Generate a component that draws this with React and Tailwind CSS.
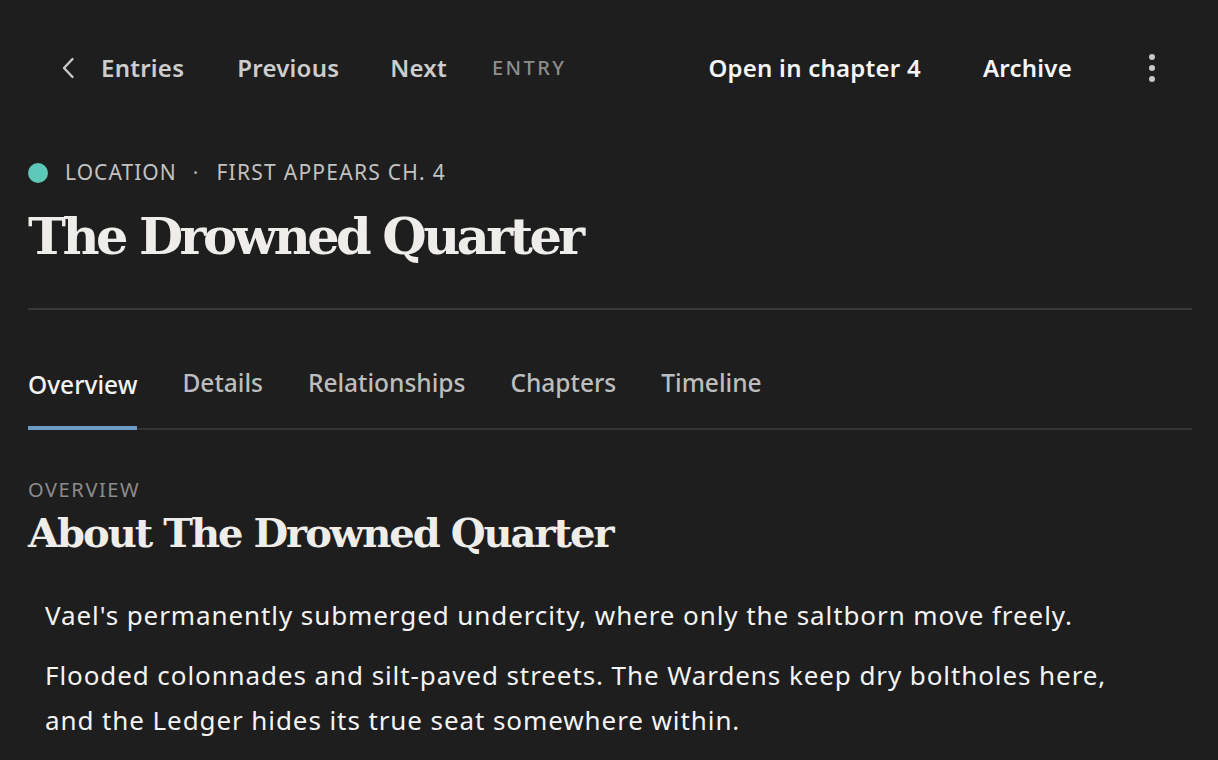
import React from "react";

export default function App() {
  return (
    <div className="min-h-screen w-full bg-[#1e1e1e] text-[#f0eeea] font-['Noto_Sans',sans-serif] pt-[40px]">
      <header className="flex items-center h-[56px] pl-[56px] pr-[54px]">
        <div className="flex items-center">
          <button className="flex items-center justify-center w-[24px] h-[40px] text-[#c9c9c9]">
            <svg width="14" height="22" viewBox="0 0 14 22" fill="none">
              <path d="M11.5 2 L3 11 L11.5 20" stroke="currentColor" strokeWidth="2.4" strokeLinecap="round" strokeLinejoin="round" />
            </svg>
          </button>
          <span className="ml-[21px] text-[24px] font-semibold tracking-[0.01em] text-[#cdcdcd]">Entries</span>
          <span className="ml-[53px] text-[24px] font-semibold tracking-[0.01em] text-[#cdcdcd]">Previous</span>
          <span className="ml-[51px] text-[24px] font-semibold tracking-[0.01em] text-[#cdcdcd]">Next</span>
          <span className="ml-[45px] text-[20px] font-medium tracking-[0.12em] text-[#8d8d8d]">ENTRY</span>
        </div>
        <div className="ml-auto flex items-center">
          <span className="text-[24px] font-semibold tracking-[0.01em] text-[#f5f5f5]">Open in chapter 4</span>
          <span className="ml-[62px] text-[24px] font-semibold tracking-[0.01em] text-[#f5f5f5]">Archive</span>
          <button className="ml-[68px] flex flex-col items-center gap-[5px] w-[24px]">
            <span className="block w-[6px] h-[6px] rounded-full bg-[#c8c8c8]" />
            <span className="block w-[6px] h-[6px] rounded-full bg-[#c8c8c8]" />
            <span className="block w-[6px] h-[6px] rounded-full bg-[#c8c8c8]" />
          </button>
        </div>
      </header>

      <main className="px-[28px] mr-[-2px]">
        <div className="flex items-center mt-[62px] h-[30px]">
          <span className="block w-[20px] h-[20px] rounded-full bg-[#5ec8b8]" />
          <span className="ml-[17px] text-[21px] tracking-[0.05em] text-[#c2c2c2]">LOCATION</span>
          <span className="ml-[16px] text-[21px] text-[#a8a8a8]">·</span>
          <span className="ml-[18px] text-[21px] tracking-[0.06em] text-[#c2c2c2]">FIRST APPEARS CH. 4</span>
        </div>
        <h1 className="mt-[16px] text-[51px] leading-[64px] font-bold tracking-[-0.07em] font-['DejaVu_Serif',serif] text-[#efedea]">
          The Drowned Quarter
        </h1>
        <div className="mt-[40px] h-[2px] bg-[#383838]" />

        <nav className="mt-[55px] flex items-end border-b-2 border-[#333333]">
          {["Overview", "Details", "Relationships", "Chapters", "Timeline"].map((t, i) => (
            <div
              key={t}
              className={
                i === 0
                  ? "mr-[45px] pb-[22px] text-[24.5px] font-medium text-[#f2f2f2] border-b-4 border-[#6b9ac4] mb-[-2px]"
                  : "mr-[45px] pb-[26px] text-[24.5px] font-medium text-[#bdbdbd]"
              }
            >
              {t}
            </div>
          ))}
        </nav>

        <div className="mt-[48px] text-[20px] tracking-[0.08em] text-[#8c8c8c] leading-[24px]">OVERVIEW</div>
        <h2 className="mt-[6px] text-[40px] leading-[50px] font-bold tracking-[-0.05em] font-['DejaVu_Serif',serif] text-[#efedea]">
          About The Drowned Quarter
        </h2>
        <div className="mt-[35px] pl-[17px] pr-[40px] text-[26px] leading-[45px] tracking-[0.035em] text-[#f3f3f3]">
          <p>Vael's permanently submerged undercity, where only the saltborn move freely.</p>
          <p className="mt-[15px] max-w-[1100px]">
            Flooded colonnades and silt-paved streets. The Wardens keep dry boltholes here, and the Ledger hides its true seat somewhere within.
          </p>
        </div>
      </main>
    </div>
  );
}
